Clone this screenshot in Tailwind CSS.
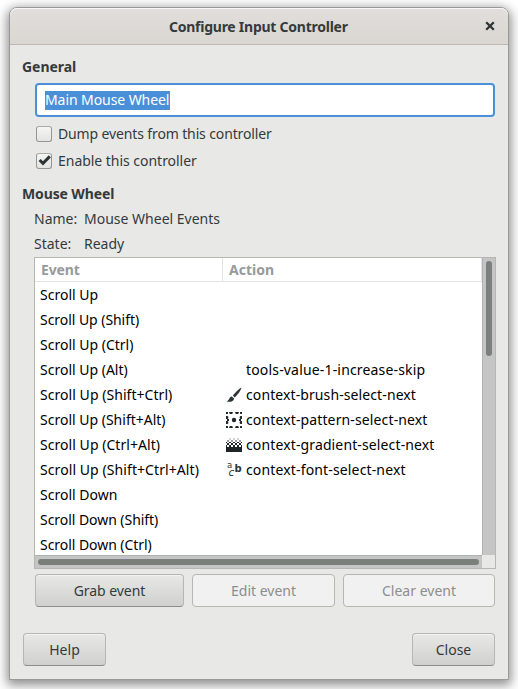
<!DOCTYPE html>
<html lang="en">
<head>
<meta charset="utf-8">
<title>Configure Input Controller</title>
<script src="https://cdn.jsdelivr.net/npm/@tailwindcss/browser@4"></script>
</head>
<body class="h-[689px] w-[518px] overflow-hidden bg-white pt-[7px] pl-[9px] font-['Noto_Sans',sans-serif] text-[14px] leading-[25px] text-[#343a3c]">
<main class="flex h-[673px] w-[500px] flex-col rounded-t-[8px] border border-[#999999] bg-[#e8e8e6] shadow-[0_3px_11px_2px_rgba(0,0,0,0.45)]">
  <header class="flex h-[37px] shrink-0 items-center rounded-t-[7px] border-b border-[#bfb8b1] bg-linear-to-b from-[#e1dedb] to-[#dad6d2] pr-[13px] pl-[159px] shadow-[inset_0_1px_#f8f7f7]">
    <h1 class="pt-px font-bold whitespace-nowrap tracking-[-0.25px]">Configure Input Controller</h1>
    <button class="ml-auto" aria-label="Close">
      <svg class="block h-[10px] w-[10px]" viewBox="0 0 10 10" fill="none" stroke="#2e3436" stroke-width="2.3"><path d="M1.2 1.2 8.8 8.8M8.8 1.2 1.2 8.8"/></svg>
    </button>
  </header>

  <section class="pt-[9px] pr-[13px] pl-[12px]">
    <h2 class="font-bold tracking-[-0.05px]">General</h2>
    <div class="mt-[4px] ml-[13px] flex h-[34px] w-[460px] items-center rounded-[4px] border-2 border-[#4a90d9] bg-white pl-[8px]">
      <span class="h-[19px] w-[125px] bg-[#4a90d9] leading-[18px] whitespace-nowrap text-white tracking-[-0.08px]">Main Mouse Wheel</span>
    </div>
    <div class="mt-[3px] ml-[14px] flex h-[27px] items-center gap-[6px]">
      <span class="h-4 w-4 rounded-[3px] border border-[#969793] border-t-[#abaca8] bg-linear-to-b from-[#f5f5f4] to-[#e4e4e2]"></span>
      <span class="tracking-[-0.13px]">Dump events from this controller</span>
    </div>
    <div class="ml-[14px] flex h-[27px] items-center gap-[6px]">
      <span class="h-4 w-4 rounded-[3px] border border-[#969793] border-t-[#abaca8] bg-linear-to-b from-[#f5f5f4] to-[#e4e4e2]">
        <svg class="block h-[14px] w-[14px]" viewBox="0 0 14 14" fill="none" stroke="#2e3436" stroke-width="3"><path d="M2.600 6 6 9.400 12.800 2.400"/></svg>
      </span>
      <span class="tracking-[-0.03px]">Enable this controller</span>
    </div>
  </section>

  <section class="pt-[7px] pl-[12px]">
    <h2 class="font-bold tracking-[-0.12px]">Mouse Wheel</h2>
    <dl class="grid grid-cols-[50px_1fr] pl-[12px]">
      <dt>Name:</dt><dd>Mouse Wheel Events</dd>
      <dt>State:</dt><dd>Ready</dd>
    </dl>
    <div class="mt-[1px] ml-[12px] grid h-[312px] w-[462px] grid-cols-[447px_13px] grid-rows-[297px_13px] border border-[#b6b6b3] bg-[#e8e8e7]">
      <div class="overflow-hidden bg-white text-black">
        <div class="flex h-[24px] border-b border-[#e4e4e4] leading-[24px] font-bold text-[#979a9b]">
          <span class="w-[188px] border-r border-[#e4e4e4] pl-[6px] tracking-[-0.15px]">Event</span>
          <span class="flex-1 border-r border-[#e4e4e4] pl-[6px]">Action</span>
        </div>
        <div class="grid auto-rows-[25px] grid-cols-[186px_20px_1fr] items-center pl-[5px] whitespace-nowrap">
          <span class="col-span-3">Scroll Up</span>
          <span class="col-span-3 tracking-[-0.05px]">Scroll Up (Shift)</span>
          <span class="col-span-3">Scroll Up (Ctrl)</span>
          <span>Scroll Up (Alt)</span><span></span><span class="tracking-[0.17px]">tools-value-1-increase-skip</span>
          <span class="tracking-[0.05px]">Scroll Up (Shift+Ctrl)</span>
          <svg class="h-4 w-4" viewBox="0 0 16 16" fill="#2e3436"><path d="M15.6.4C13 1.700 9.300 5.200 6.800 8.600l2 1.900C11.900 7.300 15 3.200 15.600.4ZM5.900 9.400C3.500 9.200 3.800 12.500.8 14.400 3.500 15.500 7.900 14.600 8.100 11.500Z"/></svg>
          <span class="tracking-[0.1px]">context-brush-select-next</span>
          <span>Scroll Up (Shift+Alt)</span>
          <svg class="h-4 w-4" viewBox="0 0 16 16" fill="#202527"><circle cx="8" cy="8" r="2.200"/><path d="M0 0h2v1.500L1.500 2H0zM14 0h2v2h-1.500L14 1.500zM0 14h1.500l.5.500V16H0zM14.500 14H16v2h-2v-1.500zM3.200 0h3.600v1L6 2H4l-.8-1zM9.200 0h3.600v1L12 2h-2l-.8-1zM4 14h2l.8 1v1H3.200v-1zM10 14h2l.8 1v1H9.200v-1zM0 4h1.500l.8.800v1.400l-.8.800H0zM16 4h-1.500l-.8.800v1.400l.8.800H16zM0 9h1.500l.8.800v1.400l-.8.800H0zM16 9h-1.500l-.8.800v1.400l.8.800H16zM1 7h2v2H1zM13 7h2v2h-2z"/></svg>
          <span class="tracking-[0.13px]">context-pattern-select-next</span>
          <span class="tracking-[0.05px]">Scroll Up (Ctrl+Alt)</span>
          <svg class="h-4 w-4" viewBox="0 0 16 16" fill="#202527"><path opacity=".2" d="M3 1h2v2H3zM7 1h2v2H7zM11 1h2v2h-2z"/><path opacity=".45" d="M1 3h2v2H1zM5 3h2v2H5zM9 3h2v2H9zM13 3h2v2h-2z"/><path d="M0 5h1v1H0zM3 5h2v1H3zM7 5h2v1H7zM11 5h2v1h-2zM15 5h1v1h-1zM1 6h2v2H1zM5 6h2v2H5zM9 6h2v2H9zM13 6h2v2h-2zM0 8h1v2H0zM3 8h2v2H3zM7 8h2v2H7zM11 8h2v2h-2zM15 8h1v2h-1zM0 10h16v5H0z"/></svg>
          <span class="tracking-[0.13px]">context-gradient-select-next</span>
          <span class="tracking-[0.08px]">Scroll Up (Shift+Ctrl+Alt)</span>
          <svg class="h-4 w-4 overflow-visible" viewBox="0 0 16 16" fill="#2e3436"><text x="1" y="6.200" font-family="DejaVu Sans" font-size="8.500">a</text><text x="8.600" y="10" font-family="DejaVu Sans" font-weight="700" font-size="10">b</text><text x="2.500" y="14" font-family="DejaVu Sans" font-style="italic" font-size="10.500">c</text></svg>
          <span class="tracking-[0.15px]">context-font-select-next</span>
          <span class="col-span-3">Scroll Down</span>
          <span class="col-span-3 tracking-[-0.05px]">Scroll Down (Shift)</span>
          <span class="col-span-3 tracking-[-0.05px]">Scroll Down (Ctrl)</span>
        </div>
      </div>
      <div class="border-l border-[#b0b2b1] bg-[#c4c5c4] pt-[3px] pl-[3px]"><div class="h-[95px] w-[6px] rounded-full bg-[#7b7f7f]"></div></div>
      <div class="border-t border-[#b0b2b1] bg-[#c4c5c4] pt-[3px] pl-[3px]"><div class="h-[6px] w-[441px] rounded-full bg-[#7b7f7c]"></div></div>
    </div>
    <div class="mt-[5px] ml-[13px] flex gap-[8px]">
      <button class="h-[33px] w-[149px] rounded-[4px] border border-[#b6b6b3] border-b-[#8d8d8a] bg-linear-to-b from-[#e8e8e6] to-[#d0d0ce] tracking-[-0.05px] shadow-[inset_0_1px_#f3f3f2]">Grab event</button>
      <button class="h-[33px] w-[143px] rounded-[4px] border border-[#b6b6b3] bg-[#f1f1f1] text-[#8b8e8f]">Edit event</button>
      <button class="h-[33px] w-[152px] rounded-[4px] border border-[#b6b6b3] bg-[#f1f1f1] text-[#8b8e8f]">Clear event</button>
    </div>
  </section>
  <footer class="flex justify-between pt-[26px] pr-[13px] pl-[13px]">
    <button class="h-[33px] w-[83px] rounded-[4px] border border-[#b6b6b3] border-b-[#8d8d8a] bg-linear-to-b from-[#e8e8e6] to-[#d0d0ce] shadow-[inset_0_1px_#f3f3f2]">Help</button>
    <button class="h-[33px] w-[83px] rounded-[4px] border border-[#b6b6b3] border-b-[#8d8d8a] bg-linear-to-b from-[#e8e8e6] to-[#d0d0ce] shadow-[inset_0_1px_#f3f3f2]">Close</button>
  </footer>
</main>
</body>
</html>
